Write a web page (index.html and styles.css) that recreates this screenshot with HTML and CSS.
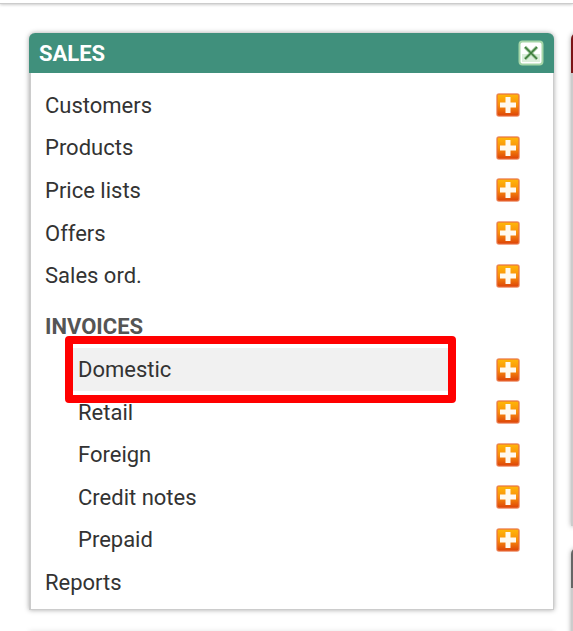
FILE: index.html
```
<!DOCTYPE html>
<html lang="en">
<head>
    <meta charset="UTF-8">
    <meta name="viewport" content="width=device-width, initial-scale=1.0">
    <title>Sales</title>
    <link rel="stylesheet" href="styles.css">
</head>
<body>
    <svg class="symbols" aria-hidden="true">
        <defs>
            <linearGradient id="orange" x1="0" y1="0" x2="0" y2="1">
                <stop offset="0" stop-color="#ffb808"/>
                <stop offset="0.5" stop-color="#f9900c"/>
                <stop offset="1" stop-color="#dc4208"/>
            </linearGradient>
            <symbol id="plus" viewBox="0 0 24 24">
                <rect x="1" y="1" width="22" height="22" rx="2" fill="url(#orange)" stroke="#e9713f" stroke-opacity="0.8" stroke-width="1.5"/>
                <path d="M9.5 4h5v5.500h5.500v5h-5.500v5.500h-5v-5.500h-5.500v-5h5.500z" fill="#fffaf0"/>
            </symbol>
        </defs>
    </svg>

    <header class="topbar"></header>

    <main class="dashboard">
        <div class="column">
            <section class="panel">
                <div class="panel-header">
                    <h2>SALES</h2>
                    <button type="button" class="close" aria-label="Close">
                        <svg viewBox="0 0 26 26">
                            <rect x="1.500" y="1.500" width="23" height="23" rx="3" fill="#fff" stroke="#a5d6a8" stroke-width="2"/>
                            <path d="M4 14h18v8H4z" fill="#dcefdc"/>
                            <path d="M7 7l12 12M19 7L7 19" stroke="#a9cfa6" stroke-width="3.500"/>
                            <path d="M7 7l12 12M19 7L7 19" stroke="#3d7d3c" stroke-width="1.700"/>
                        </svg>
                    </button>
                </div>
                <div class="panel-body">
                    <ul class="menu">
                        <li><a href="#">Customers</a><button type="button" class="add" aria-label="Add customer"><svg><use href="#plus"/></svg></button></li>
                        <li><a href="#">Products</a><button type="button" class="add" aria-label="Add product"><svg><use href="#plus"/></svg></button></li>
                        <li><a href="#">Price lists</a><button type="button" class="add" aria-label="Add price list"><svg><use href="#plus"/></svg></button></li>
                        <li><a href="#">Offers</a><button type="button" class="add" aria-label="Add offer"><svg><use href="#plus"/></svg></button></li>
                        <li><a href="#">Sales ord.</a><button type="button" class="add" aria-label="Add sales order"><svg><use href="#plus"/></svg></button></li>
                    </ul>
                    <h3>INVOICES</h3>
                    <ul class="menu submenu">
                        <li class="active"><a href="#">Domestic</a><button type="button" class="add" aria-label="Add domestic invoice"><svg><use href="#plus"/></svg></button></li>
                        <li><a href="#">Retail</a><button type="button" class="add" aria-label="Add retail invoice"><svg><use href="#plus"/></svg></button></li>
                        <li><a href="#">Foreign</a><button type="button" class="add" aria-label="Add foreign invoice"><svg><use href="#plus"/></svg></button></li>
                        <li><a href="#">Credit notes</a><button type="button" class="add" aria-label="Add credit note"><svg><use href="#plus"/></svg></button></li>
                        <li><a href="#">Prepaid</a><button type="button" class="add" aria-label="Add prepaid invoice"><svg><use href="#plus"/></svg></button></li>
                    </ul>
                    <a href="#" class="reports">Reports</a>
                </div>
            </section>
            <section class="panel"></section>
        </div>
        <div class="column side">
            <section class="panel tall">
                <div class="panel-header red"></div>
            </section>
            <section class="panel tall">
                <div class="panel-header gray"></div>
            </section>
        </div>
    </main>
</body>
</html>
```

FILE: styles.css
```
* {
    box-sizing: border-box;
}
body {
    margin: 0;
    height: 100vh;
    overflow: hidden;
    background-color: #fff;
    color: #333;
    font-family: Roboto, sans-serif;
    font-size: 22px;
}
h2, h3, ul {
    margin: 0;
    padding: 0;
}
h2, h3 {
    font-size: 22px;
    font-weight: 700;
}
a {
    color: #333;
    text-decoration: none;
}
button {
    padding: 0;
    border: none;
    background: none;
    cursor: pointer;
}
svg {
    display: block;
    width: 100%;
    height: 100%;
}
.symbols {
    position: absolute;
    width: 0;
    height: 0;
}
.topbar {
    height: 4px;
    border-bottom: 1px solid #ccc;
    box-shadow: 0 1px 3px rgba(0, 0, 0, 0.2);
}
.dashboard {
    display: grid;
    grid-template-columns: 1fr 2px;
    gap: 17px;
    padding: 29px 0 0 29px;
}
.panel {
    margin-bottom: 22px;
    border: 1px solid #ccc;
    border-top: none;
    border-left-width: 2px;
    border-radius: 6px 6px 0 0;
    background-color: #fff;
    box-shadow: 0 0 5px rgba(0, 0, 0, 0.35);
}
.panel-header {
    display: flex;
    align-items: center;
    justify-content: space-between;
    height: 40px;
    margin: 0 -1px 0 -2px;
    padding: 0 10px;
    border-radius: 6px 6px 0 0;
    background-color: #40907c;
}
.panel-header h2 {
    color: #fff;
}
.red {
    background-color: #7c1517;
}
.gray {
    background-color: #666;
}
.tall {
    width: 525px;
    height: 493px;
}
.close {
    width: 26px;
    height: 26px;
}
.panel-body {
    padding: 11px 33px 5px 14px;
}
.menu {
    display: grid;
    grid-auto-rows: 1fr;
    height: 213px;
    list-style: none;
}
.menu li {
    display: flex;
    align-items: center;
    justify-content: space-between;
}
.add {
    width: 24px;
    height: 24px;
}
h3 {
    padding-top: 9px;
    color: #555;
    line-height: 42px;
}
.submenu {
    padding-left: 33px;
}
.active a {
    position: relative;
    flex: 1;
    margin: 0 48px 0 -5px;
    padding-left: 5px;
    background-color: #f1f1f1;
    line-height: 43px;
}
/* red frame around the current item */
.active a::after {
    content: "";
    position: absolute;
    inset: -12px -8px;
    border: 8px solid #f00;
    border-radius: 4px;
}
.reports {
    display: block;
    line-height: 43px;
}
```
